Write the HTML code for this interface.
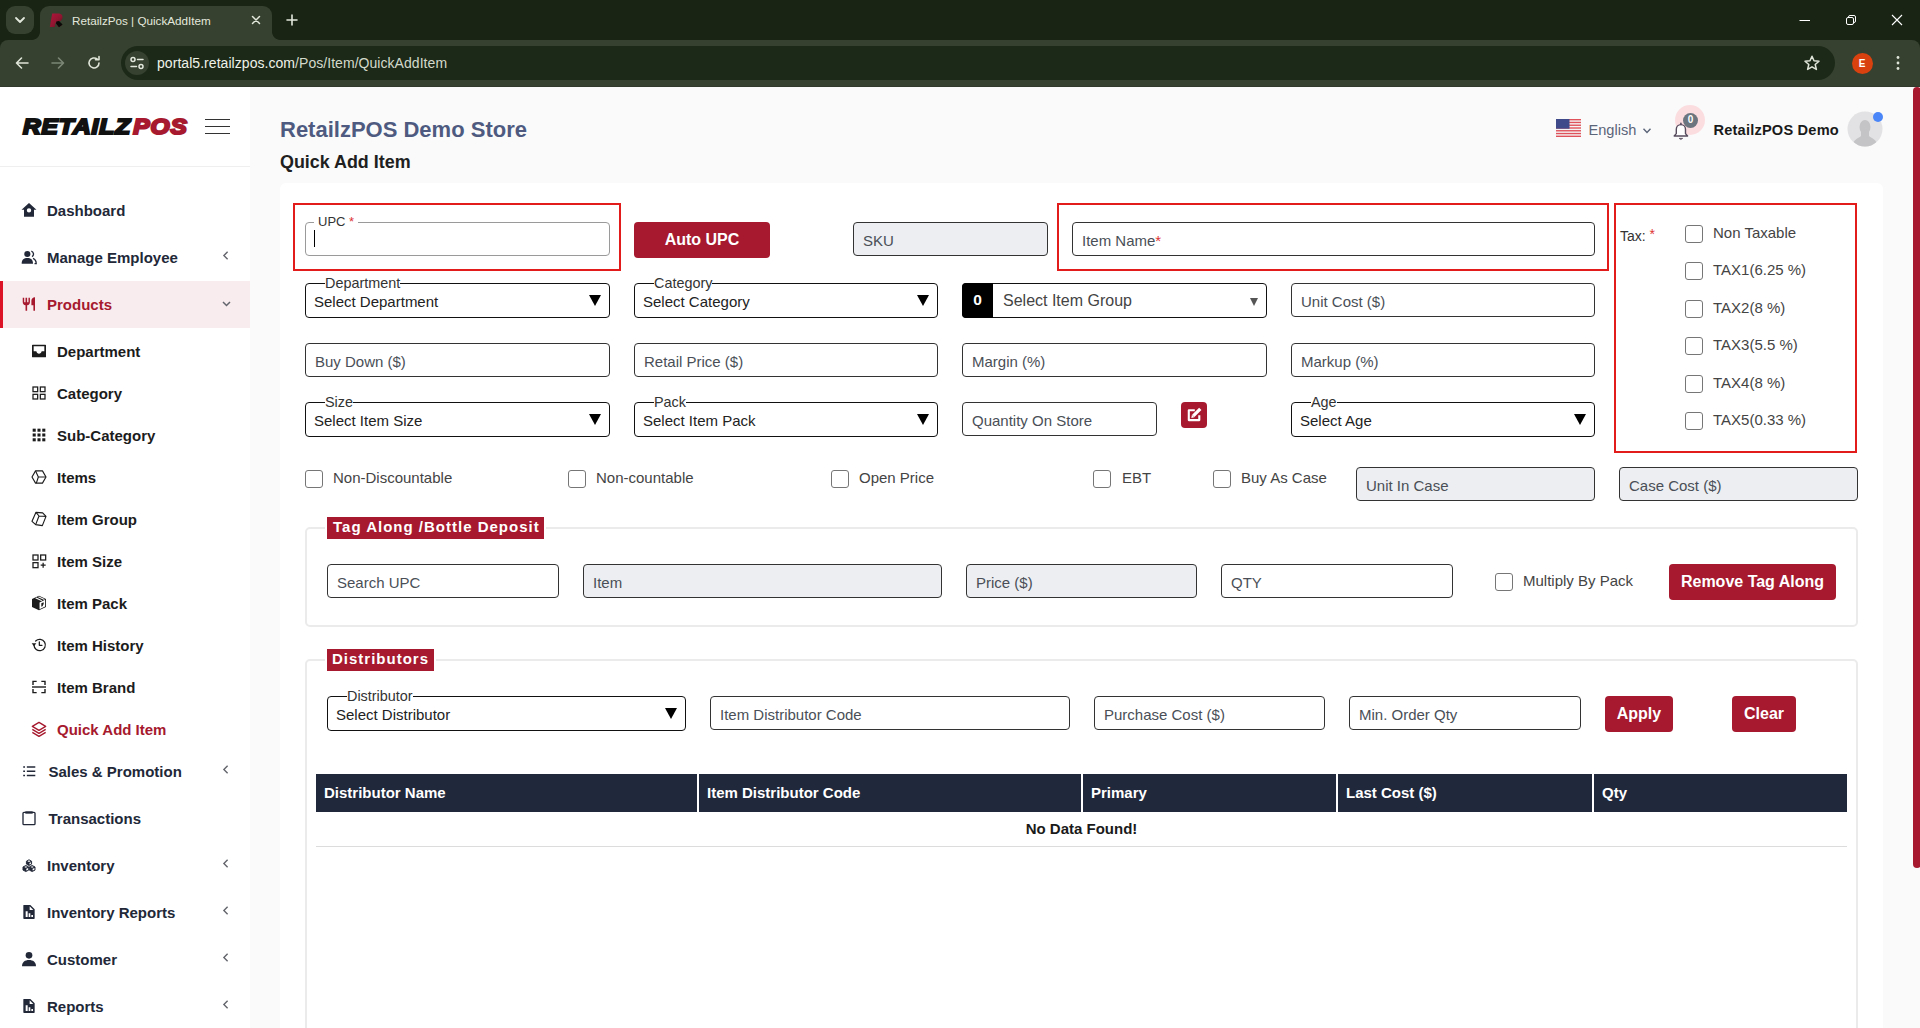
<!DOCTYPE html>
<html lang="en">
<head>
<meta charset="utf-8">
<title>RetailzPos | QuickAddItem</title>
<style>
*{box-sizing:border-box;margin:0;padding:0}
html,body{width:1920px;height:1028px;overflow:hidden;background:#fafafa;font-family:"Liberation Sans",Arial,sans-serif;color:#212529}
.abs{position:absolute}
#chrome{position:absolute;left:0;top:0;width:1920px;height:87px;background:#192414}
#toolbar{position:absolute;left:0;top:40px;width:1920px;height:47px;background:#36412f;border-radius:8px 8px 0 0}
#tab{position:absolute;left:40px;top:6px;width:232px;height:36px;background:#36412f;border-radius:9px 9px 0 0}
#tabdd{position:absolute;left:6px;top:6px;width:28px;height:28px;border-radius:9px;background:#36412f}
#omni{position:absolute;left:121px;top:46px;width:1714px;height:34px;border-radius:17px;background:#1d2918}
#siteinfo{position:absolute;left:125px;top:51px;width:24px;height:24px;border-radius:12px;background:#36412f}
.ctext{position:absolute;color:#e3e8dd;white-space:nowrap}
#page{position:absolute;left:0;top:87px;width:1920px;height:941px;background:#fafafa;overflow:hidden}
#sidebar{position:absolute;left:0;top:0;width:250px;height:941px;background:#fff}
#main{position:absolute;left:250px;top:0;width:1663px;height:941px}
#sbthumb{position:absolute;left:1913px;top:0;width:8px;height:781px;background:#a6192e;border-radius:4px}
.mi{position:absolute;left:0;width:250px;height:47px;font-weight:bold;font-size:15px;color:#1f2937;white-space:nowrap}
.mi span{position:absolute;left:47px;top:0;line-height:47px}
.mi.sub span{left:57px}
.mi svg{position:absolute}
.chev{position:absolute;left:221.8px;top:16.3px;width:7.5px;height:11.2px}
.inp{position:absolute;height:34px;border:1px solid #333;border-radius:4px;background:#fff;font-size:15px;color:#4a4f57;line-height:32px;padding-left:9px;padding-top:2px;white-space:nowrap}
.inp.dis{background:#eceef1}
.sel{position:absolute;height:35px;border:1px solid #111;border-radius:4px;background:#fff;font-size:15px;color:#222;white-space:nowrap}
.sel .lg{position:absolute;left:19px;top:-10px;height:18px;line-height:18px;background:#fff;padding:0;font-size:14.4px;color:#333}
.sel .val{position:absolute;left:8px;top:9px;line-height:18px}
.sel .arr{position:absolute;right:8px;top:11px;width:0;height:0;border-left:6px solid transparent;border-right:6px solid transparent;border-top:11px solid #000}
.btn{position:absolute;height:36px;background:#a6192e;color:#fff;font-weight:bold;font-size:16px;line-height:36px;text-align:center;border-radius:4px;white-space:nowrap}
.cb{position:absolute;width:18px;height:18px;border:1px solid #767676;border-radius:3px;background:#fff}
.lbl{position:absolute;font-size:15px;color:#444;white-space:nowrap;line-height:18px}
.redbox{position:absolute;border:2px solid #e21b1b}
.fs{position:absolute;border:2px solid #ebebeb;border-radius:5px}
.lgd{position:absolute;height:22px;background:#a6192e;color:#fff;font-weight:bold;font-size:15px;letter-spacing:1px;line-height:20.5px;white-space:nowrap;padding-left:6px;box-shadow:0 0 0 2px #fff}
.th{position:absolute;top:687px;height:38px;background:#20283b;color:#fff;font-weight:bold;font-size:15px;line-height:38px;padding-left:8px;white-space:nowrap}
</style>
</head>
<body>
<div id="chrome">
  <div id="tabdd"></div>
  <div id="tab"></div>
  <div id="toolbar"></div>
  <div class="abs" style="left:32px;top:32px;width:8px;height:8px;background:radial-gradient(circle at 0 0,rgba(54,65,47,0) 7.500px,#36412f 8.200px)"></div>
  <div class="abs" style="left:272px;top:32px;width:8px;height:8px;background:radial-gradient(circle at 100% 0,rgba(54,65,47,0) 7.500px,#36412f 8.200px)"></div>
  <div id="omni"></div>
  <div id="siteinfo"></div>
  <svg class="abs" style="left:14px;top:15px" width="12" height="10" viewBox="0 0 12 10"><path d="M2 3 L6 7 L10 3" fill="none" stroke="#e3e8dd" stroke-width="1.8" stroke-linecap="round" stroke-linejoin="round"/></svg>
  <svg class="abs" style="left:48px;top:12px" width="16" height="16" viewBox="0 0 16 16"><defs><linearGradient id="fg" x1="0" y1="0" x2="1" y2="1"><stop offset="0" stop-color="#b3123a"/><stop offset="0.55" stop-color="#8f1630"/><stop offset="1" stop-color="#4a0c18"/></linearGradient></defs><path d="M1.800 15 L4.200 1.500 H10 C13.800 1.500 15 3.800 14.400 6.200 C14 8.200 12.400 9.300 10.400 9.600 L13.800 13.400 L10 15 L7.600 10.400 L6.800 15 Z" fill="url(#fg)"/><path d="M8.300 9.400 L11 9 L14.600 12.600 L11 15.200 L8 11.500 Z" fill="#0a0a08"/></svg>
  <div class="ctext" style="left:72px;top:12.500px;font-size:11.700px;line-height:16px">RetailzPos | QuickAddItem</div>
  <svg class="abs" style="left:251px;top:15px" width="10" height="10" viewBox="0 0 10 10"><path d="M1.5 1.5 L8.5 8.5 M8.5 1.5 L1.5 8.5" stroke="#e3e8dd" stroke-width="1.5" stroke-linecap="round"/></svg>
  <svg class="abs" style="left:286px;top:14px" width="12" height="12" viewBox="0 0 12 12"><path d="M6 1 V11 M1 6 H11" stroke="#e3e8dd" stroke-width="1.6" stroke-linecap="round"/></svg>
  <!-- window controls -->
  <svg class="abs" style="left:1799px;top:14px" width="12" height="12" viewBox="0 0 12 12"><path d="M0.5 6.5 H11" stroke="#fff" stroke-width="1"/></svg>
  <svg class="abs" style="left:1845px;top:14px" width="12" height="12" viewBox="0 0 12 12"><rect x="1.5" y="3.5" width="7" height="7" rx="1.5" fill="none" stroke="#fff" stroke-width="1"/><path d="M3.5 3.5 V3 A1.5 1.5 0 0 1 5 1.5 H9 A1.5 1.5 0 0 1 10.5 3 V7 A1.5 1.5 0 0 1 9 8.5 H8.5" fill="none" stroke="#fff" stroke-width="1"/></svg>
  <svg class="abs" style="left:1891px;top:14px" width="12" height="12" viewBox="0 0 12 12"><path d="M1 1 L11 11 M11 1 L1 11" stroke="#fff" stroke-width="1.1"/></svg>
  <!-- nav -->
  <svg class="abs" style="left:15px;top:56px" width="14" height="14" viewBox="0 0 14 14"><path d="M13 7 H2 M6.5 2 L1.5 7 L6.5 12" fill="none" stroke="#dfe5d8" stroke-width="1.6" stroke-linecap="round" stroke-linejoin="round"/></svg>
  <svg class="abs" style="left:51px;top:56px" width="14" height="14" viewBox="0 0 14 14"><path d="M1 7 H12 M7.5 2 L12.5 7 L7.5 12" fill="none" stroke="#7b8675" stroke-width="1.6" stroke-linecap="round" stroke-linejoin="round"/></svg>
  <svg class="abs" style="left:86px;top:55px" width="16" height="16" viewBox="0 0 16 16"><path d="M13 8 A5 5 0 1 1 11.3 4.2" fill="none" stroke="#dfe5d8" stroke-width="1.6" stroke-linecap="round"/><path d="M9.5 4.8 H13 V1.5" fill="none" stroke="#dfe5d8" stroke-width="1.6" stroke-linecap="round" stroke-linejoin="round"/></svg>
  <svg class="abs" style="left:129px;top:56px" width="16" height="14" viewBox="0 0 16 14"><circle cx="4" cy="3.5" r="2" fill="none" stroke="#e3e8dd" stroke-width="1.5"/><path d="M8.5 3.5 H14" stroke="#e3e8dd" stroke-width="1.5" stroke-linecap="round"/><circle cx="12" cy="10.5" r="2" fill="none" stroke="#e3e8dd" stroke-width="1.5"/><path d="M2 10.5 H7.5" stroke="#e3e8dd" stroke-width="1.5" stroke-linecap="round"/></svg>
  <div class="ctext" style="left:157px;top:54px;font-size:14px;line-height:18px;letter-spacing:0.05px;color:#eef2e9">portal5.retailzpos.com<span style="color:#d3dacb">/Pos/Item/QuickAddItem</span></div>
  <svg class="abs" style="left:1803px;top:54px" width="18" height="18" viewBox="0 0 18 18"><path d="M9 2.2 L11 6.8 L16 7.2 L12.2 10.5 L13.4 15.4 L9 12.8 L4.6 15.4 L5.8 10.5 L2 7.2 L7 6.8 Z" fill="none" stroke="#dfe5d8" stroke-width="1.5" stroke-linejoin="round"/></svg>
  <div class="abs" style="left:1851.500px;top:52.500px;width:21px;height:21px;border-radius:10.500px;background:#d9420f;color:#fff;font-size:10px;font-weight:bold;line-height:21px;text-align:center">E</div>
  <svg class="abs" style="left:1895px;top:53px" width="6" height="20" viewBox="0 0 6 20"><circle cx="3" cy="4.500" r="1.400" fill="#dfe5d8"/><circle cx="3" cy="10" r="1.400" fill="#dfe5d8"/><circle cx="3" cy="15.500" r="1.400" fill="#dfe5d8"/></svg>
  <div class="abs" style="left:0;top:86px;width:1920px;height:1px;background:#30392c"></div>
  <!--CHROME-->
</div>
<div id="page">
  <div id="sidebar">
  <div class="abs" style="left:22.6px;top:24px;width:170px;height:32px;white-space:nowrap;font-weight:bold;font-style:italic;font-size:22.5px;line-height:32px;letter-spacing:0.9px;color:#111;-webkit-text-stroke:2.2px #111;transform:scaleX(1.085);transform-origin:0 50%"><span>RETAILZ</span><span style="color:#a6192e;-webkit-text-stroke:2.2px #a6192e;margin-left:2px">POS</span></div>
  <div class="abs" style="left:205px;top:32px;width:25px;height:1px;background:#333"></div><div class="abs" style="left:205px;top:39px;width:25px;height:1px;background:#333"></div><div class="abs" style="left:205px;top:46px;width:25px;height:1px;background:#333"></div>
  <div class="abs" style="left:0;top:79px;width:250px;height:1px;background:#efefef"></div>
  <div class="abs" style="left:0;top:194px;width:250px;height:47px;background:#f9ecee;border-left:3px solid #dc1226"></div>
  <div class="mi" style="top:100px;color:#222838"><svg style="left:21px;top:14.6px" width="16" height="16" viewBox="0 0 24 24"><path fill-rule="evenodd" fill="#222838" d="M12 1.5 L0.8 11.5 H4.5 V22 H19.5 V11.5 H23.2 Z M12 9.2 A3.3 3.3 0 1 0 12 15.8 A3.3 3.3 0 1 0 12 9.2 Z"/></svg><span>Dashboard</span></div>
  <div class="mi" style="top:147px;color:#222838"><svg style="left:21px;top:14.6px" width="16" height="16" viewBox="0 0 24 24"><circle cx="9.5" cy="7.5" r="4.6" fill="#222838"/><path d="M1 22 C1 16 4.5 13.5 9.5 13.5 C14.5 13.5 18 16 18 22 Z" fill="#222838"/><path d="M15.5 3.2 A4.6 4.6 0 0 1 16.5 11.5 M18 14.2 C21 15.5 22.8 18 22.8 22 H20.3" fill="none" stroke="#222838" stroke-width="2"/></svg><span>Manage Employee</span><svg class="chev" viewBox="0 0 8 12"><path d="M6 2 L2 6 L6 10" fill="none" stroke="#63656c" stroke-width="1.5"/></svg></div>
  <div class="mi" style="top:194px;color:#a6192e"><svg style="left:21px;top:14.6px" width="16" height="16" viewBox="0 0 24 24"><path fill="#a6192e" d="M21 2v20h-2.4v-8h-3V7a5 5 0 0 1 5.4-5zM9.2 13.9V22H6.8v-8.1A5 5 0 0 1 2.6 9V2.5h2.2v7h2V2.5h2.4v7h2V2.5h2.2V9a5 5 0 0 1-4.2 4.9z"/></svg><span>Products</span><svg class="chev" style="left:220.7px;top:19px;width:11px;height:8px" viewBox="0 0 11 8"><path d="M2 2 L5.500 5.500 L9 2" fill="none" stroke="#63656c" stroke-width="1.500"/></svg></div>
  <div class="mi sub" style="top:244px;height:42px;color:#1c1c1c"><svg style="left:31px;top:11.8px" width="16" height="16" viewBox="0 0 24 24"><path fill-rule="evenodd" fill="#1c1c1c" d="M2.5 2.5 H21.5 A1 1 0 0 1 22.500 3.5 V20.500 A1 1 0 0 1 21.5 21.5 H2.5 A1 1 0 0 1 1.5 20.500 V3.5 A1 1 0 0 1 2.5 2.5 Z M4 5 V12.500 H8 C8.5 15 10 16.2 12 16.2 C14 16.2 15.5 15 16 12.500 H20 V5 Z"/></svg><span style="line-height:42px">Department</span></div>
  <div class="mi sub" style="top:286px;height:42px;color:#1c1c1c"><svg style="left:31px;top:11.8px" width="16" height="16" viewBox="0 0 24 24"><g fill="none" stroke="#1c1c1c" stroke-width="1.9"><rect x="3" y="3" width="7" height="7"/><rect x="14" y="3" width="7" height="7"/><rect x="3" y="14" width="7" height="7"/><rect x="14" y="14" width="7" height="7"/></g></svg><span style="line-height:42px">Category</span></div>
  <div class="mi sub" style="top:328px;height:42px;color:#1c1c1c"><svg style="left:31px;top:11.8px" width="16" height="16" viewBox="0 0 24 24"><rect x="2.5" y="2.5" width="4.6" height="4.6" fill="#1c1c1c"/><rect x="2.5" y="9.7" width="4.6" height="4.6" fill="#1c1c1c"/><rect x="2.5" y="16.9" width="4.6" height="4.6" fill="#1c1c1c"/><rect x="9.7" y="2.5" width="4.6" height="4.6" fill="#1c1c1c"/><rect x="9.7" y="9.7" width="4.6" height="4.6" fill="#1c1c1c"/><rect x="9.7" y="16.9" width="4.6" height="4.6" fill="#1c1c1c"/><rect x="16.9" y="2.5" width="4.6" height="4.6" fill="#1c1c1c"/><rect x="16.9" y="9.7" width="4.6" height="4.6" fill="#1c1c1c"/><rect x="16.9" y="16.9" width="4.6" height="4.6" fill="#1c1c1c"/></svg><span style="line-height:42px">Sub-Category</span></div>
  <div class="mi sub" style="top:370px;height:42px;color:#1c1c1c"><svg style="left:31px;top:11.8px" width="16" height="16" viewBox="0 0 24 24"><g fill="none" stroke="#1c1c1c" stroke-width="1.7" stroke-linejoin="round"><path d="M1.5 12 L6.8 2.8 H17.2 L22.500 12 L17.2 21.2 H6.8 Z"/><path d="M6.8 2.8 L11 12 L8 21.2 M11 12 H22.500"/></g></svg><span style="line-height:42px">Items</span></div>
  <div class="mi sub" style="top:412px;height:42px;color:#1c1c1c"><svg style="left:31px;top:11.8px" width="16" height="16" viewBox="0 0 24 24"><g fill="none" stroke="#1c1c1c" stroke-width="1.7" stroke-linejoin="round"><path d="M7.500 2 L17.500 2.8 L22.500 8 L17 22 L7 20.500 L1.500 15.500 Z"/><path d="M7.500 2 L12 7.500 L22.500 8 M12 7.500 L7 20.500"/></g></svg><span style="line-height:42px">Item Group</span></div>
  <div class="mi sub" style="top:454px;height:42px;color:#1c1c1c"><svg style="left:31px;top:11.8px" width="16" height="16" viewBox="0 0 24 24"><g fill="none" stroke="#1c1c1c" stroke-width="1.9"><rect x="3" y="3" width="7.500" height="7.500"/><rect x="14.500" y="3" width="7.500" height="7.500"/><rect x="3" y="14.500" width="7.500" height="7.500"/><path d="M18.200 14.500 V22 M14.500 18.200 H22"/></g></svg><span style="line-height:42px">Item Size</span></div>
  <div class="mi sub" style="top:496px;height:42px;color:#1c1c1c"><svg style="left:31px;top:11.8px" width="16" height="16" viewBox="0 0 24 24"><path fill="#1c1c1c" d="M12 1 L22.500 6 V18 L12 23 L1.500 18 V6 Z"/><path fill="#fff" d="M12.800 11.200 L21.200 7.200 V17.200 L12.800 21.200 Z M6.300 4.800 L8.200 3.900 L17.200 8.200 L15.300 9.100 Z M10 3 L12 2.100 L21 6.400 L19 7.300 Z"/><path fill="#1c1c1c" d="M15.500 12.500 L19 10.800 V14.200 L17.800 14.800 V16.500 L15.500 17.600 Z"/></svg><span style="line-height:42px">Item Pack</span></div>
  <div class="mi sub" style="top:538px;height:42px;color:#1c1c1c"><svg style="left:31px;top:11.8px" width="16" height="16" viewBox="0 0 24 24"><g fill="none" stroke="#1c1c1c" stroke-width="1.9" stroke-linecap="round" stroke-linejoin="round"><path d="M4.500 12 A8.500 8.500 0 1 0 7 6"/><path d="M12.500 7.500 V12.500 H16.500"/></g><path fill="#1c1c1c" d="M1 9.500 L8 9.500 L4.500 14 Z"/></svg><span style="line-height:42px">Item History</span></div>
  <div class="mi sub" style="top:580px;height:42px;color:#1c1c1c"><svg style="left:31px;top:11.8px" width="16" height="16" viewBox="0 0 24 24"><g fill="none" stroke="#1c1c1c" stroke-width="2.1"><path d="M3 9 V3.500 H8.500 M15.500 3.500 H21 V9 M21 15 V20.500 H15.500 M8.500 20.500 H3 V15"/><path d="M1.500 12 H22.500"/></g></svg><span style="line-height:42px">Item Brand</span></div>
  <div class="mi sub" style="top:622px;height:42px;color:#a6192e"><svg style="left:31px;top:11.8px" width="16" height="16" viewBox="0 0 24 24"><g fill="none" stroke="#a6192e" stroke-width="2" stroke-linejoin="round"><path d="M12 2 L22 8 L12 14 L2 8 Z"/><path d="M2 12.500 L12 18.500 L22 12.500 M2 17 L12 23 L22 17"/></g></svg><span style="line-height:42px">Quick Add Item</span></div>
  <div class="mi" style="top:661px;color:#222838"><svg style="left:22px;top:16px" width="14.5" height="14.5" viewBox="0 0 24 24"><g stroke="#222838" stroke-width="2.2"><path d="M8 5 H22 M8 12 H22 M8 19 H22"/><path d="M2 5 H5 M2 12 H5 M2 19 H5"/></g></svg><span style="left:48.5px">Sales &amp; Promotion</span><svg class="chev" viewBox="0 0 8 12"><path d="M6 2 L2 6 L6 10" fill="none" stroke="#63656c" stroke-width="1.5"/></svg></div>
  <div class="mi" style="top:708px;color:#222838"><svg style="left:21px;top:14.8px" width="16" height="16" viewBox="0 0 24 24"><g fill="none" stroke="#222838" stroke-width="2" stroke-linejoin="round"><rect x="3" y="3.500" width="18" height="18.500" rx="1.500"/></g><path d="M6.500 2 H17.500 V5.500 H6.500 Z" fill="#222838"/></svg><span style="left:48.5px">Transactions</span></div>
  <div class="mi" style="top:755px;color:#222838"><svg style="left:21px;top:14.8px" width="16" height="16" viewBox="0 0 24 24"><g transform="translate(12 13.2) scale(0.86) translate(-12 -12)" fill="#222838" stroke="#222838" stroke-width="1.6" stroke-linejoin="round"><path d="M12 1.500 L16.500 4 V9 L12 11.500 L7.500 9 V4 Z"/><path d="M6.500 11.500 L11.500 14 V19.500 L6.500 22 L1.500 19.500 V14 Z"/><path d="M17.500 11.500 L22.500 14 V19.500 L17.500 22 L12.500 19.500 V14 Z"/><g fill="#fff" stroke="none"><path d="M12.800 7.300 L15.500 5.800 V8.300 L12.800 9.800 Z"/><path d="M9.300 3.900 L12 2.500 L14.700 3.900 L12 5.300 Z"/><path d="M7.300 17.300 L10.500 15.700 V18.800 L7.300 20.400 Z"/><path d="M3.800 13.900 L6.500 12.600 L9.200 13.900 L6.500 15.300 Z"/><path d="M18.300 17.300 L21.500 15.700 V18.800 L18.300 20.400 Z"/><path d="M14.800 13.900 L17.500 12.600 L20.200 13.900 L17.500 15.300 Z"/></g></g></svg><span style="left:47px">Inventory</span><svg class="chev" viewBox="0 0 8 12"><path d="M6 2 L2 6 L6 10" fill="none" stroke="#63656c" stroke-width="1.5"/></svg></div>
  <div class="mi" style="top:802px;color:#222838"><svg style="left:21px;top:14.8px" width="16" height="16" viewBox="0 0 24 24"><path fill-rule="evenodd" fill="#222838" d="M4 1.500 H14 L20.500 8 V21.500 A1 1 0 0 1 19.500 22.500 H4.500 A1 1 0 0 1 3.500 21.500 V2.500 A1 1 0 0 1 4 1.500 Z M13 3.500 V9 H18.500 Z M7 11 H10 V19.500 H7 Z M11.500 14 H14 V19.500 H11.500 Z M15.500 16.500 H18 V19.500 H15.500 Z"/></svg><span style="left:47px">Inventory Reports</span><svg class="chev" viewBox="0 0 8 12"><path d="M6 2 L2 6 L6 10" fill="none" stroke="#63656c" stroke-width="1.5"/></svg></div>
  <div class="mi" style="top:849px;color:#222838"><svg style="left:21px;top:14.8px" width="16" height="16" viewBox="0 0 24 24"><circle cx="12" cy="6.500" r="5" fill="#222838"/><path d="M1.500 23 C1.500 16.500 6 13.500 12 13.500 C18 13.500 22.500 16.500 22.500 23 Z" fill="#222838"/></svg><span style="left:47px">Customer</span><svg class="chev" viewBox="0 0 8 12"><path d="M6 2 L2 6 L6 10" fill="none" stroke="#63656c" stroke-width="1.5"/></svg></div>
  <div class="mi" style="top:896px;color:#222838"><svg style="left:21px;top:14.8px" width="16" height="16" viewBox="0 0 24 24"><path fill-rule="evenodd" fill="#222838" d="M4 1.500 H14 L20.500 8 V21.500 A1 1 0 0 1 19.500 22.500 H4.500 A1 1 0 0 1 3.500 21.500 V2.500 A1 1 0 0 1 4 1.500 Z M13 3.500 V9 H18.500 Z M7 11 H10 V19.500 H7 Z M11.500 14 H14 V19.500 H11.500 Z M15.500 16.500 H18 V19.500 H15.500 Z"/></svg><span style="left:47px">Reports</span><svg class="chev" viewBox="0 0 8 12"><path d="M6 2 L2 6 L6 10" fill="none" stroke="#63656c" stroke-width="1.5"/></svg></div>
  <!--SIDEBAR-->
  </div>
  <div id="main">
  <div class="abs" style="left:30px;top:29.7px;font-size:22px;font-weight:bold;color:#4e5a80;line-height:26px;white-space:nowrap">RetailzPOS Demo Store</div>
  <div class="abs" style="left:30px;top:64px;font-size:17.9px;font-weight:bold;color:#202020;line-height:22px;white-space:nowrap">Quick Add Item</div>
  <svg class="abs" style="left:1306px;top:32px" width="25" height="18" viewBox="0 0 25 18"><rect width="25" height="18" rx="1.5" fill="#f5f5f5"/><rect x="0" y="0.00" width="25" height="1.38" fill="#e0525b"/><rect x="0" y="2.77" width="25" height="1.38" fill="#e0525b"/><rect x="0" y="5.54" width="25" height="1.38" fill="#e0525b"/><rect x="0" y="8.31" width="25" height="1.38" fill="#e0525b"/><rect x="0" y="11.08" width="25" height="1.38" fill="#e0525b"/><rect x="0" y="13.85" width="25" height="1.38" fill="#e0525b"/><rect x="0" y="16.62" width="25" height="1.38" fill="#e0525b"/><rect width="13.5" height="9.7" fill="#3f4a8a"/></svg>
  <div class="abs" style="left:1338.5px;top:34px;font-size:14.6px;color:#5b6579;line-height:18px;white-space:nowrap">English</div>
  <svg class="abs" style="left:1391.5px;top:39.5px" width="10" height="8" viewBox="0 0 10 8"><path d="M1.500 1.800 L5 5.500 L8.500 1.800" fill="none" stroke="#5b6579" stroke-width="1.400"/></svg>
  <div class="abs" style="left:1424.7px;top:18.2px;width:30px;height:30px;border-radius:15px;background:#fbdde0"></div>
  <svg class="abs" style="left:1422px;top:35px" width="18" height="19" viewBox="0 0 18 19"><path d="M2.200 14 L4.300 11.600 V7.200 A4.600 4.600 0 0 1 13.500 7.200 V11.600 L15.600 14 Z" fill="#fff" stroke="#574b5e" stroke-width="1.400" stroke-linejoin="round"/><path d="M8.900 1.300 V2.600" stroke="#574b5e" stroke-width="1.400" stroke-linecap="round"/><path d="M7 16.300 H10.800 L8.900 17.600 Z" fill="#574b5e" stroke="#574b5e" stroke-width="0.600" stroke-linejoin="round"/></svg>
  <div class="abs" style="left:1433.2px;top:26.2px;width:14.6px;height:14.6px;border-radius:8px;background:#6c757d;color:#fff;font-size:10px;font-weight:bold;line-height:14.6px;text-align:center">0</div>
  <div class="abs" style="left:1463.5px;top:34px;font-size:14.6px;font-weight:bold;color:#1a1a1a;line-height:18px;letter-spacing:0.2px;white-space:nowrap">RetailzPOS Demo</div>
  <svg class="abs" style="left:1597px;top:24px" width="36" height="36" viewBox="0 0 36 36"><defs><clipPath id="av"><circle cx="18" cy="18" r="17.500"/></clipPath></defs><circle cx="18" cy="18" r="17.500" fill="#e2e2e4"/><g clip-path="url(#av)"><ellipse cx="18" cy="16" rx="5.500" ry="7" fill="#c4c4c6"/><path d="M5 36 C6 28 12 27 14 25 V21 H22 V25 C24 27 30 28 31 36 Z" fill="#c4c4c6"/></g></svg>
  <div class="abs" style="left:1623px;top:25px;width:10px;height:10px;border-radius:5px;background:#4a86f7"></div>
  <div class="abs" style="left:30px;top:96px;width:1603px;height:900px;background:#fff;border-radius:6px"></div>
  <div class="redbox" style="left:43px;top:116px;width:328px;height:68px"></div>
  <div class="redbox" style="left:807px;top:116px;width:552px;height:68px"></div>
  <div class="redbox" style="left:1364px;top:116px;width:243px;height:250px"></div>
  <div class="inp" style="left:55px;top:135px;width:305px;border-color:#9a9a9a"><div class="abs" style="left:8px;top:-9.3px;height:16px;line-height:16px;background:#fff;padding:0 4px 0 4px;font-size:13px;color:#333">UPC <span style="color:#d33">*</span></div><div class="abs" style="left:7.500px;top:7px;width:1px;height:17px;background:#000"></div></div>
  <div class="btn" style="left:384px;top:135px;width:136px;height:36px;line-height:35px">Auto UPC</div>
  <div class="inp dis" style="left:603px;top:135px;width:195px">SKU</div>
  <div class="inp" style="left:822px;top:135px;width:523px">Item Name<span style="color:#d33">*</span></div>
  <div class="sel" style="left:55px;top:196px;width:305px"><div class="lg" style="left:19px">Department</div><div class="val">Select Department</div><div class="arr"></div></div>
  <div class="sel" style="left:384px;top:196px;width:304px"><div class="lg" style="left:19px">Category</div><div class="val">Select Category</div><div class="arr"></div></div>
  <div class="sel" style="left:712px;top:196px;width:305px"><div class="abs" style="left:-1px;top:-1px;width:31px;height:35px;background:#000;border-radius:4px 0 0 4px;color:#fff;font-weight:bold;font-size:15.500px;line-height:34px;text-align:center">0</div><div class="abs" style="left:40px;top:7px;font-size:16px;line-height:20px;color:#444">Select Item Group</div><div class="abs" style="right:8px;top:14px;width:0;height:0;border-left:4.5px solid transparent;border-right:4.5px solid transparent;border-top:8px solid #555"></div></div>
  <div class="inp" style="left:1041px;top:196px;width:304px">Unit Cost ($)</div>
  <div class="inp" style="left:55px;top:256px;width:305px">Buy Down ($)</div>
  <div class="inp" style="left:384px;top:256px;width:304px">Retail Price ($)</div>
  <div class="inp" style="left:712px;top:256px;width:305px">Margin (%)</div>
  <div class="inp" style="left:1041px;top:256px;width:304px">Markup (%)</div>
  <div class="sel" style="left:55px;top:315px;width:305px"><div class="lg" style="left:19px">Size</div><div class="val">Select Item Size</div><div class="arr"></div></div>
  <div class="sel" style="left:384px;top:315px;width:304px"><div class="lg" style="left:19px">Pack</div><div class="val">Select Item Pack</div><div class="arr"></div></div>
  <div class="inp" style="left:712px;top:315px;width:195px">Quantity On Store</div>
  <div class="abs" style="left:931px;top:315px;width:26px;height:26px;border-radius:4px;background:#a6192e"><svg class="abs" style="left:0;top:0" width="26" height="26" viewBox="0 0 26 26"><path d="M13.800 8.300 H7.800 V18.100 H18.300 V13.200" fill="none" stroke="#fff" stroke-width="2.100" stroke-linejoin="round"/><path d="M19.300 6.900 L12.300 13.900" stroke="#fff" stroke-width="3.300"/><path d="M10.300 15.900 L10.900 12.700 L13.500 15.300 Z" fill="#fff"/></svg></div>
  <div class="sel" style="left:1041px;top:315px;width:304px"><div class="lg" style="left:19px">Age</div><div class="val">Select Age</div><div class="arr"></div></div>
  <div class="lbl" style="left:1370px;top:140px;color:#333;font-size:14px">Tax: <span style="color:#d33;position:relative;top:-2px;left:0px">*</span></div>
  <div class="cb" style="left:1435px;top:138px"></div><div class="lbl" style="left:1463px;top:137px;">Non Taxable</div>
  <div class="cb" style="left:1435px;top:175px"></div><div class="lbl" style="left:1463px;top:174px;">TAX1(6.25 %)</div>
  <div class="cb" style="left:1435px;top:213px"></div><div class="lbl" style="left:1463px;top:212px;">TAX2(8 %)</div>
  <div class="cb" style="left:1435px;top:250px"></div><div class="lbl" style="left:1463px;top:249px;">TAX3(5.5 %)</div>
  <div class="cb" style="left:1435px;top:288px"></div><div class="lbl" style="left:1463px;top:287px;">TAX4(8 %)</div>
  <div class="cb" style="left:1435px;top:325px"></div><div class="lbl" style="left:1463px;top:324px;">TAX5(0.33 %)</div>
  <div class="cb" style="left:55px;top:383px"></div><div class="lbl" style="left:83px;top:382px;">Non-Discountable</div>
  <div class="cb" style="left:318px;top:383px"></div><div class="lbl" style="left:346px;top:382px;">Non-countable</div>
  <div class="cb" style="left:581px;top:383px"></div><div class="lbl" style="left:609px;top:382px;">Open Price</div>
  <div class="cb" style="left:843px;top:383px"></div><div class="lbl" style="left:872px;top:382px;">EBT</div>
  <div class="cb" style="left:963px;top:383px"></div><div class="lbl" style="left:991px;top:382px;">Buy As Case</div>
  <div class="inp dis" style="left:1106px;top:380px;width:239px">Unit In Case</div>
  <div class="inp dis" style="left:1369px;top:380px;width:239px">Case Cost ($)</div>
  <div class="fs" style="left:55px;top:440px;width:1553px;height:100px"></div>
  <div class="lgd" style="left:77px;top:430px;width:217px">Tag Along /Bottle Deposit</div>
  <div class="inp" style="left:77px;top:477px;width:232px">Search UPC</div>
  <div class="inp dis" style="left:333px;top:477px;width:359px">Item</div>
  <div class="inp dis" style="left:716px;top:477px;width:231px">Price ($)</div>
  <div class="inp" style="left:971px;top:477px;width:232px">QTY</div>
  <div class="cb" style="left:1245px;top:486px"></div><div class="lbl" style="left:1273px;top:485px;">Multiply By Pack</div>
  <div class="btn" style="left:1419px;top:477px;width:167px;height:36px;line-height:35px">Remove Tag Along</div>
  <div class="fs" style="left:55px;top:572px;width:1553px;height:500px"></div>
  <div class="lgd" style="left:77px;top:562px;width:107px;padding-left:5px">Distributors</div>
  <div class="sel" style="left:77px;top:609px;width:359px"><div class="lg" style="left:19px">Distributor</div><div class="val">Select Distributor</div><div class="arr"></div></div>
  <div class="inp" style="left:460px;top:609px;width:360px">Item Distributor Code</div>
  <div class="inp" style="left:844px;top:609px;width:231px">Purchase Cost ($)</div>
  <div class="inp" style="left:1099px;top:609px;width:232px">Min. Order Qty</div>
  <div class="btn" style="left:1355px;top:609px;width:68px;height:36px;line-height:35px">Apply</div>
  <div class="btn" style="left:1482px;top:609px;width:64px;height:36px;line-height:35px">Clear</div>
  <div class="th" style="left:66px;top:687px;width:381px">Distributor Name</div>
  <div class="th" style="left:449px;top:687px;width:382px">Item Distributor Code</div>
  <div class="th" style="left:833px;top:687px;width:253px">Primary</div>
  <div class="th" style="left:1088px;top:687px;width:254px">Last Cost ($)</div>
  <div class="th" style="left:1344px;top:687px;width:253px">Qty</div>
  <div class="abs" style="left:66px;top:725px;width:1531px;height:34px;line-height:34px;text-align:center;font-weight:bold;font-size:15px;color:#1a1a1a">No Data Found!</div>
  <div class="abs" style="left:66px;top:759px;width:1531px;height:1px;background:#dcdcdc"></div>
  <!--MAIN-->
  </div>
  <div id="sbthumb"></div>
</div>
</body>
</html>
